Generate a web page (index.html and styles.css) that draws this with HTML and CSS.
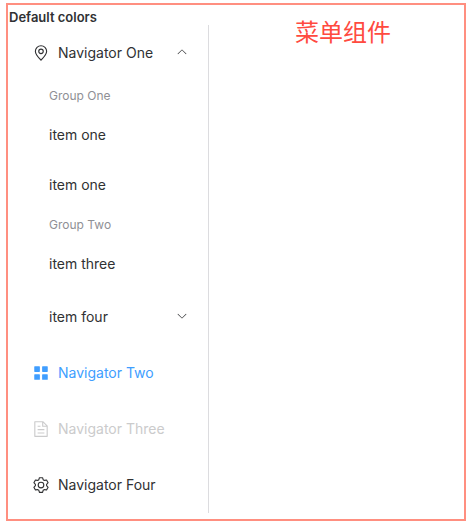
FILE: index.html
```html
<!DOCTYPE html>
<html lang="en">
<head>
<meta charset="utf-8">
<title>Menu</title>
<link rel="stylesheet" href="styles.css">
</head>
<body>
<main class="frame">
  <section class="demo">
    <h5 class="heading">Default colors</h5>
    <ul class="menu">
      <li>
        <div class="row">
          <svg class="icon" viewBox="0 0 1024 1024"><path d="M800 416a288 288 0 1 0-576 0c0 118.144 94.528 272.128 288 456.576C705.472 688.128 800 534.144 800 416M512 960C277.312 746.688 160 565.312 160 416a352 352 0 0 1 704 0c0 149.312-117.312 330.688-352 544"/><path d="M512 512a96 96 0 1 0 0-192 96 96 0 0 0 0 192m0 64a160 160 0 1 1 0-320 160 160 0 0 1 0 320"/></svg>
          <span class="label">Navigator One</span>
          <svg class="arrow open" viewBox="0 0 1024 1024"><path d="M831.872 340.864 512 652.672 192.128 340.864a30.592 30.592 0 0 0-42.752 0 29.12 29.12 0 0 0 0 41.6L489.664 714.24a32 32 0 0 0 44.672 0l340.288-331.712a29.12 29.12 0 0 0 0-41.728 30.592 30.592 0 0 0-42.752 0z"/></svg>
        </div>
        <div class="group">Group One</div>
        <div class="row sub"><span class="label">item one</span></div>
        <div class="row sub"><span class="label">item one</span></div>
        <div class="group">Group Two</div>
        <div class="row sub"><span class="label">item three</span></div>
        <div class="row nested">
          <span class="label">item four</span>
          <svg class="arrow" viewBox="0 0 1024 1024"><path d="M831.872 340.864 512 652.672 192.128 340.864a30.592 30.592 0 0 0-42.752 0 29.12 29.12 0 0 0 0 41.6L489.664 714.24a32 32 0 0 0 44.672 0l340.288-331.712a29.12 29.12 0 0 0 0-41.728 30.592 30.592 0 0 0-42.752 0z"/></svg>
        </div>
      </li>
      <li class="row active">
        <svg class="icon" viewBox="0 0 1024 1024"><path d="M160 448a32 32 0 0 1-32-32V160a32 32 0 0 1 32-32h256a32 32 0 0 1 32 32v256a32 32 0 0 1-32 32zm448 0a32 32 0 0 1-32-32V160a32 32 0 0 1 32-32h256a32 32 0 0 1 32 32v256a32 32 0 0 1-32 32zM160 896a32 32 0 0 1-32-32V608a32 32 0 0 1 32-32h256a32 32 0 0 1 32 32v256a32 32 0 0 1-32 32zm448 0a32 32 0 0 1-32-32V608a32 32 0 0 1 32-32h256a32 32 0 0 1 32 32v256a32 32 0 0 1-32 32z"/></svg>
        <span class="label">Navigator Two</span>
      </li>
      <li class="row disabled">
        <svg class="icon" viewBox="0 0 1024 1024"><path d="M832 384H576V128H192v768h640zm-26.496-64L640 154.496V320zM160 64h480l256 256v608a32 32 0 0 1-32 32H160a32 32 0 0 1-32-32V96a32 32 0 0 1 32-32m160 448h384v64H320zm0-192h160v64H320zm0 384h384v64H320z"/></svg>
        <span class="label">Navigator Three</span>
      </li>
      <li class="row">
        <svg class="icon" viewBox="0 0 1024 1024"><path d="M600.704 64a32 32 0 0 1 30.464 22.208l35.2 109.376c14.784 7.232 28.928 15.36 42.432 24.512l112.384-24.192a32 32 0 0 1 34.432 15.36L944.32 364.8a32 32 0 0 1-4.032 37.504l-77.12 85.12a357.12 357.12 0 0 1 0 49.024l77.12 85.248a32 32 0 0 1 4.032 37.504l-88.704 153.6a32 32 0 0 1-34.432 15.296L708.8 803.904c-13.44 9.088-27.648 17.28-42.368 24.512l-35.264 109.376A32 32 0 0 1 600.704 960H423.296a32 32 0 0 1-30.464-22.208L357.696 828.48a351.616 351.616 0 0 1-42.56-24.64l-112.32 24.256a32 32 0 0 1-34.432-15.36L79.68 659.2a32 32 0 0 1 4.032-37.504l77.12-85.248a357.12 357.12 0 0 1 0-48.896l-77.12-85.248A32 32 0 0 1 79.68 364.8l88.704-153.6a32 32 0 0 1 34.432-15.296l112.32 24.256c13.568-9.152 27.776-17.408 42.56-24.64l35.2-109.312A32 32 0 0 1 423.232 64H600.64zm-23.424 64H446.72l-36.352 113.088-24.512 11.968a294.113 294.113 0 0 0-34.816 20.096l-22.656 15.36-116.224-25.088-65.28 113.152 79.68 88.192-1.92 27.136a293.12 293.12 0 0 0 0 40.192l1.92 27.136-79.808 88.192 65.344 113.152 116.224-25.024 22.656 15.296a294.113 294.113 0 0 0 34.816 20.096l24.512 11.968L446.72 896h130.688l36.48-113.152 24.448-11.904a288.282 288.282 0 0 0 34.752-20.096l22.592-15.296 116.288 25.024 65.28-113.152-79.744-88.192 1.92-27.136a293.12 293.12 0 0 0 0-40.256l-1.92-27.136 79.808-88.128-65.344-113.152-116.288 24.96-22.592-15.232a287.616 287.616 0 0 0-34.752-20.096l-24.448-11.904L577.344 128zM512 320a192 192 0 1 1 0 384 192 192 0 0 1 0-384m0 64a128 128 0 1 0 0 256 128 128 0 0 0 0-256"/></svg>
        <span class="label">Navigator Four</span>
      </li>
    </ul>
  </section>
  <div class="title">菜单组件</div>
</main>
</body>
</html>
```
FILE: styles.css
```css
* {
  box-sizing: border-box;
}

body {
  margin: 0;
  padding: 3px 3px 3px 6px;
  background: #fff;
  color: #303133;
  font-family: Inter, "Noto Sans CJK SC", sans-serif;
}

.frame {
  display: flex;
  height: 518px;
  border: 2px solid #ff8f80;
}

.demo {
  width: 201px;
  padding-left: 1px;
}

.heading {
  margin: 0;
  height: 20px;
  font-size: 13px;
  font-weight: 600;
  line-height: 25px;
  white-space: nowrap;
}

.menu {
  width: 200px;
  margin: 0;
  padding: 0;
  border-right: 1px solid #dcdcdf;
  list-style: none;
}

.row {
  display: flex;
  align-items: center;
  height: 56px;
  padding: 0 20px;
  font-size: 14px;
  white-space: nowrap;
}

.label {
  line-height: 18px;
}

.sub {
  height: 50px;
  padding-left: 40px;
}

.nested {
  padding-left: 40px;
}

.group {
  height: 29px;
  padding: 7px 0 7px 40px;
  color: #8f9095;
  font-size: 12px;
  line-height: 15px;
}

.icon {
  width: 18px;
  height: 18px;
  margin: 0 8px 0 3px;
  fill: currentColor;
}

.arrow {
  width: 12px;
  height: 12px;
  margin: 0 0 2px auto;
  fill: currentColor;
}

.open {
  transform: rotate(180deg);
}

.active {
  color: #409eff;
}

.disabled {
  color: #cbcbcc;
}

.title {
  margin: 8px 0 0 86px;
  color: #ff4a40;
  font-family: "Noto Sans CJK SC", sans-serif;
  font-size: 24px;
  line-height: 36px;
}
```
